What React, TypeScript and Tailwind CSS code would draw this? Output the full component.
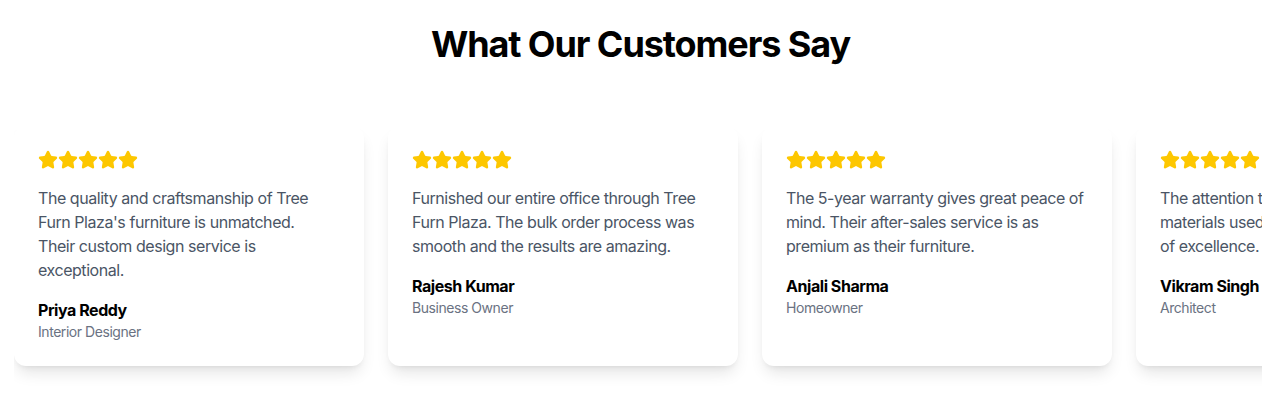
import { Star } from 'lucide-react';

const testimonials = [
  {
    text: "The quality and craftsmanship of Tree Furn Plaza's furniture is unmatched. Their\u00A0custom design service is exceptional.",
    name: 'Priya Reddy',
    role: 'Interior Designer'
  },
  {
    text: 'Furnished our entire office through Tree Furn Plaza. The bulk order process was smooth and the results are amazing.',
    name: 'Rajesh Kumar',
    role: 'Business Owner'
  },
  {
    text: 'The 5-year warranty gives great peace of mind. Their after-sales service is as premium as their furniture.',
    name: 'Anjali Sharma',
    role: 'Homeowner'
  },
  {
    text: 'The attention to detail and quality of materials used truly sets the standard of\u00A0excellence.',
    name: 'Vikram Singh',
    role: 'Architect'
  }
];

export default function App() {
  return (
    <section className="bg-white pt-[24px] font-['Inter',sans-serif] tracking-[-0.028em]">
      <h2 className="text-4xl font-bold text-black text-center mb-12 tracking-[-0.03em]">
        What Our Customers Say
      </h2>

      <div className="ml-[14px] w-[1248px] overflow-hidden pt-[14px] pb-[40px]">
        <div className="flex gap-6">
          {testimonials.map((t, index) => (
            <div
              key={index}
              className="w-[350px] shrink-0 bg-white rounded-xl p-6 shadow-lg"
            >
              <div className="flex mb-4">
                {[0, 1, 2, 3, 4].map((i) => (
                  <Star key={i} className="w-5 h-5 text-yellow-400 fill-yellow-400" />
                ))}
              </div>
              <p className="text-gray-600 leading-6 mb-4 pr-[4px]">{t.text}</p>
              <h4 className="font-bold text-black">{t.name}</h4>
              <p className="text-sm text-gray-500">{t.role}</p>
            </div>
          ))}
        </div>
      </div>
    </section>
  );
}
